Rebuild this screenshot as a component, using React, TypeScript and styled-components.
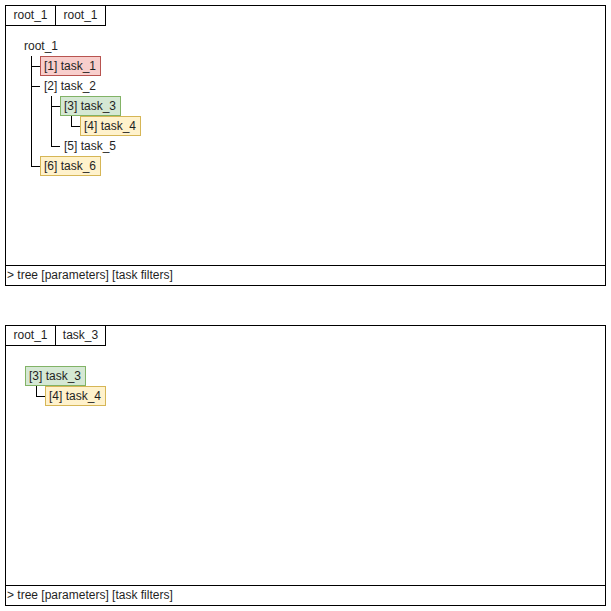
import React from "react";
import styled, { createGlobalStyle, css } from "styled-components";

const GlobalStyle = createGlobalStyle`
  html, body {
    margin: 0;
    padding: 0;
    background: #ffffff;
  }
  body {
    font-family: "Liberation Sans", Arial, sans-serif;
    font-size: 12px;
    color: #1f1f1f;
  }
`;

type Tone = "red" | "green" | "yellow";

type TaskNode = {
  label: string;
  tone?: Tone;
  children?: TaskNode[];
};

const tones = {
  red: { bg: "#f8cecc", line: "#b85450" },
  green: { bg: "#d5e8d4", line: "#82b366" },
  yellow: { bg: "#fff2cc", line: "#d6b656" },
};

const Page = styled.div`
  display: flex;
  flex-direction: column;
  gap: 39px;
  padding: 5px;
`;

const Panel = styled.section`
  box-sizing: border-box;
  width: 601px;
  height: 281px;
  border: 1px solid #000;
  display: flex;
  flex-direction: column;
`;

const TabBar = styled.div`
  display: flex;
  height: 20px;
`;

const Tab = styled.div`
  box-sizing: border-box;
  width: 50px;
  height: 20px;
  border-right: 1px solid #000;
  border-bottom: 1px solid #000;
  display: flex;
  align-items: center;
  justify-content: center;
  line-height: 19px;
`;

const TreeArea = styled.div<{ $top: number; $left: number }>`
  flex: 1;
  padding: ${(p) => p.$top}px 0 0 ${(p) => p.$left}px;
`;

const StatusBar = styled.div`
  box-sizing: border-box;
  height: 20px;
  border-top: 1px solid #000;
  padding-left: 1px;
  line-height: 19px;
`;

const Branch = styled.div`
  display: flex;
  flex-direction: column;
  align-items: flex-start;
`;

const Label = styled.div<{ $tone?: Tone }>`
  box-sizing: border-box;
  height: 20px;
  line-height: 18px;
  padding: 0 4px 0 3px;
  border: 1px solid transparent;
  white-space: nowrap;
  ${(p) =>
    p.$tone &&
    css`
      background: ${tones[p.$tone].bg};
      border-color: ${tones[p.$tone].line};
    `}
`;

const Children = styled.div`
  margin-left: 11px;
  display: flex;
  flex-direction: column;
`;

const Child = styled.div<{ $last: boolean }>`
  position: relative;
  padding-left: 9px;

  &::before {
    content: "";
    position: absolute;
    left: 0;
    top: 0;
    width: 8px;
    height: 10px;
    border-left: 1px solid #000;
    border-bottom: 1px solid #000;
  }

  ${(p) =>
    !p.$last &&
    css`
      &::after {
        content: "";
        position: absolute;
        left: 0;
        top: 0;
        bottom: 0;
        border-left: 1px solid #000;
      }
    `}
`;

function TreeNode({ node }: { node: TaskNode }) {
  const kids = node.children || [];
  return (
    <Branch>
      <Label $tone={node.tone}>{node.label}</Label>
      {kids.length > 0 && (
        <Children>
          {kids.map((c, i) => (
            <Child key={c.label} $last={i === kids.length - 1}>
              <TreeNode node={c} />
            </Child>
          ))}
        </Children>
      )}
    </Branch>
  );
}

const fullTree: TaskNode = {
  label: "root_1",
  children: [
    { label: "[1] task_1", tone: "red" },
    {
      label: "[2] task_2",
      children: [
        {
          label: "[3] task_3",
          tone: "green",
          children: [{ label: "[4] task_4", tone: "yellow" }],
        },
        { label: "[5] task_5" },
      ],
    },
    { label: "[6] task_6", tone: "yellow" },
  ],
};

const subTree: TaskNode = {
  label: "[3] task_3",
  tone: "green",
  children: [{ label: "[4] task_4", tone: "yellow" }],
};

function TaskPanel({
  tabs,
  tree,
  top,
  left,
}: {
  tabs: string[];
  tree: TaskNode;
  top: number;
  left: number;
}) {
  return (
    <Panel>
      <TabBar>
        {tabs.map((t, i) => (
          <Tab key={i}>{t}</Tab>
        ))}
      </TabBar>
      <TreeArea $top={top} $left={left}>
        <TreeNode node={tree} />
      </TreeArea>
      <StatusBar>&gt; tree [parameters] [task filters]</StatusBar>
    </Panel>
  );
}

export default function App() {
  return (
    <>
      <GlobalStyle />
      <Page>
        <TaskPanel tabs={["root_1", "root_1"]} tree={fullTree} top={10} left={14} />
        <TaskPanel tabs={["root_1", "task_3"]} tree={subTree} top={20} left={19} />
      </Page>
    </>
  );
}
